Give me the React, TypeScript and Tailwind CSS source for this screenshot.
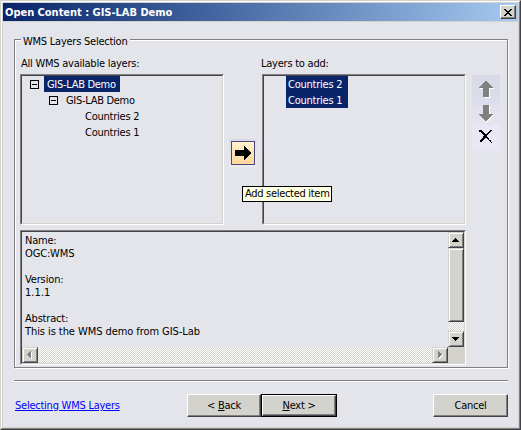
import type { ReactNode } from "react";

const raised =
  "bg-[#d4d2cc] border border-t-[#d4d2cc] border-l-[#d4d2cc] border-r-[#44414a] border-b-[#44414a] shadow-[inset_1px_1px_0_#fff,inset_-1px_-1px_0_#808080]";
const track =
  "bg-[repeating-conic-gradient(#ffffff_0_25%,#d4d2cc_0_50%)] bg-[length:2px_2px]";

function Sunken({ className, children }: { className: string; children?: ReactNode }) {
  return (
    <div className={`border border-t-[#808080] border-l-[#808080] border-r-white border-b-white ${className}`}>
      <div className="h-full border border-t-[#44414a] border-l-[#44414a] border-r-[#d4d2cc] border-b-[#d4d2cc]">
        {children}
      </div>
    </div>
  );
}

function Minus() {
  return (
    <svg width="9" height="9" shapeRendering="crispEdges" className="shrink-0">
      <path d="M0.5 0.5h8v8h-8zM2 4.5h5" fill="none" stroke="#000" />
    </svg>
  );
}

function Arrow({ d, disabled }: { d: string; disabled?: boolean }) {
  return (
    <svg width="14" height="14" shapeRendering="crispEdges" className="block">
      {disabled && <path d={d} fill="#fff" transform="translate(1 1)" />}
      <path d={d} fill={disabled ? "#808080" : "#000"} />
    </svg>
  );
}

function PushButton({ className, children }: { className: string; children: ReactNode }) {
  return (
    <button
      className={`flex h-[23px] items-center justify-center border border-t-white border-l-white border-r-[#44414a] border-b-[#44414a] bg-[#d4d2cc] shadow-[inset_-1px_-1px_0_#808080] ${className}`}
    >
      {children}
    </button>
  );
}

export default function App() {
  return (
    <div className="h-[430px] w-[521px] overflow-hidden border border-t-[#d4d2cc] border-l-[#d4d2cc] border-r-[#44414a] border-b-[#44414a] font-['DejaVu_Sans_Condensed','DejaVu_Sans',sans-serif] text-[11px] leading-[13px] tracking-[-0.24px] whitespace-nowrap text-black [font-stretch:condensed]">
      <div className="h-full border border-t-white border-l-white border-r-[#808080] border-b-[#808080]">
        <div className="flex h-full flex-col border border-[#d4d2cc] bg-[#e4e5eb]">
          <header className="flex h-[18px] shrink-0 items-center justify-between bg-linear-to-r from-[#0a246a] to-[#a6caf0] pr-[2px] pl-[2px]">
            <h1 className="text-[11px] font-bold tracking-[-0.02px] text-white">Open Content : GIS-LAB Demo</h1>
            <button className="flex h-[14px] w-4 items-center justify-center border border-t-white border-l-white border-r-[#44414a] border-b-[#44414a] bg-[#d4d2cc] shadow-[inset_-1px_-1px_0_#808080]">
              <svg width="8" height="7" shapeRendering="crispEdges">
                <path d="M0 0h2v1h1v1h2v-1h1v-1h2v1h-1v1h-1v1h-1v1h1v1h1v1h1v1h-2v-1h-1v-1h-2v1h-1v1h-2v-1h1v-1h1v-1h1v-1h-1v-1h-1v-1h-1z" />
              </svg>
            </button>
          </header>
          <div className="h-px shrink-0 bg-[#d4d2cc]" />

          <div className="mt-[17px] ml-[11px] h-[329px] w-[494px] shrink-0 border border-[#808080] shadow-[inset_1px_1px_0_#fff,1px_1px_0_#fff]">
            <div className="ml-[6px] flex h-[33px] flex-col">
              <div className="-mt-[5px] h-[13px] w-[109px] bg-[#e4e5eb] pl-[2px]">WMS Layers Selection</div>
              <div className="mt-[9px] flex">
                <span className="w-[240px]">All WMS available layers:</span>
                <span>Layers to add:</span>
              </div>
            </div>
            <div className="mt-px ml-[5px] flex">
              <Sunken className="h-[151px] w-[204px]">
                <div className="flex h-4 items-center pl-2">
                  <Minus />
                  <span className="ml-[5px] h-4 w-[76px] bg-[#0a246a] pt-px pl-[3px] leading-[15px] tracking-[-0.3px] text-white">GIS-LAB Demo</span>
                </div>
                <div className="flex h-4 items-center pl-[27px]">
                  <Minus />
                  <span className="ml-2 tracking-[-0.3px]">GIS-LAB Demo</span>
                </div>
                <div className="pt-px pl-[63px] leading-[15px]">Countries 2</div>
                <div className="pt-px pl-[63px] leading-[15px]">Countries 1</div>
              </Sunken>
              <div className="relative w-[38px] pt-[65px] pl-[5px]">
                <div className="h-7 w-7 bg-linear-to-b from-[#d9dae6] to-[#ededf4] p-[2px]">
                  <button className="flex h-6 w-6 items-center justify-center border border-[#49497c] bg-linear-to-b from-[#fff3ce] to-[#fdd69c]">
                    <svg width="16" height="14" shapeRendering="crispEdges">
                      <path d="M0 4h9V0h1v1h1v1h1v1h1v1h1v1h1v1h1v2h-1v1h-1v1h-1v1h-1v1h-1v1h-1v1H9v-4H0z" />
                    </svg>
                  </button>
                </div>
                <div className="absolute top-[112px] left-[18px] z-10 h-4 w-[90px] border border-black bg-[#ffffe1] pl-[2px] leading-[14px] tracking-[-0.3px]">
                  Add selected item
                </div>
              </div>
              <Sunken className="h-[151px] w-[204px]">
                <div className="ml-[22px] h-8 w-[62px] bg-[#0a246a] pl-[2px] leading-[15px] text-white">
                  <div className="pt-px">Countries 2</div>
                  <div className="pt-px">Countries 1</div>
                </div>
              </Sunken>
              <div className="mt-px ml-[6px] h-[76px] w-7 bg-[#e6e5ee]">
                <div className="flex h-[30px] justify-center bg-linear-to-b from-[#d8d9e5] to-[#dcdeed] pt-[6px]">
                  <svg width="16" height="18" shapeRendering="crispEdges">
                    {["#fff", "#808080"].map((c, i) => (
                      <path
                        key={c}
                        fill={c}
                        transform={i ? "" : "translate(1 1)"}
                        d="M7 0h2v1h1v1h1v1h1v1h1v1h1v1h1v1h-4v9H5V7H1V6h1V5h1V4h1V3h1V2h1V1h1z"
                      />
                    ))}
                  </svg>
                </div>
                <div className="flex h-5 justify-center bg-linear-to-b from-[#e1e1ed] to-[#e5e5ed]">
                  <svg width="16" height="18" shapeRendering="crispEdges">
                    {["#fff", "#808080"].map((c, i) => (
                      <path
                        key={c}
                        fill={c}
                        transform={i ? "" : "translate(1 1)"}
                        d="M5 0h6v9h4v1h-1v1h-1v1h-1v1h-1v1h-1v1H9v1H7v-1H6v-1H5v-1H4v-1H3v-1H2v-1H1V9h4z"
                      />
                    ))}
                  </svg>
                </div>
                <div className="flex h-[26px] justify-center bg-[#e9e7f5] pt-1">
                  <svg width="16" height="15" shapeRendering="crispEdges">
                    <path
                      fill="none"
                      stroke="#000"
                      d="M1 1.5h3M12 1.5h2M1 2.5h4M11 2.5h2M3 3.5h3M10 3.5h2M4 4.5h3M9 4.5h2M5 5.5h5M6 6.5h3M5 7.5h4M5 8.5h5M4 9.5h3M9 9.5h2M3 10.5h3M10 10.5h1M2 11.5h3M11 11.5h2M2 12.5h2M12 12.5h1M13 13.5h1"
                    />
                  </svg>
                </div>
              </div>
            </div>

            <Sunken className="mt-[5px] ml-[5px] h-[135px] w-[446px]">
              <div className="flex h-[115px]">
                <div className="w-[426px] pt-[2px] pl-[3px]">
                  <p>Name:</p>
                  <p className="tracking-[-0.15px]">OGC:WMS</p>
                  <p className="mt-[13px] tracking-[-0.15px]">Version:</p>
                  <p className="tracking-[0.05px]">1.1.1</p>
                  <p className="mt-[13px] tracking-[-0.2px]">Abstract:</p>
                  <p className="tracking-[-0.07px]">This is the WMS demo from GIS-Lab</p>
                </div>
                <div className={`flex w-4 flex-col ${track}`}>
                  <div className={`h-4 ${raised}`}>
                    <Arrow d="M6 5h1v1h1v1h1v1h1v1H3V8h1V7h1V6h1z" />
                  </div>
                  <div className={`mb-[9px] h-[74px] ${raised}`} />
                  <div className={`h-4 ${raised}`}>
                    <Arrow d="M3 5h7v1H9v1H8v1H7v1H6V8H5V7H4V6H3z" />
                  </div>
                </div>
              </div>
              <div className="flex h-4 w-[442px]">
                <div className={`flex w-[426px] justify-between ${track}`}>
                  <div className={`w-4 ${raised}`}>
                    <Arrow disabled d="M8 3v7H7V9H6V8H5V7H4V6h1V5h1V4h1V3z" />
                  </div>
                  <div className={`w-4 ${raised}`}>
                    <Arrow disabled d="M5 3h1v1h1v1h1v1h1v1H8v1H7v1H6v1H5z" />
                  </div>
                </div>
                <div className="w-4 bg-[#d4d2cc]" />
              </div>
            </Sunken>
          </div>

          <div className="mt-3 ml-[11px] h-[2px] w-[494px] shrink-0 border-t border-b border-t-[#808080] border-b-white" />
          <footer className="mt-3 ml-[11px] flex w-[494px]">
            <a href="#" className="mt-[5px] ml-px w-[172px] text-[#0000ff] underline underline-offset-1">
              Selecting WMS Layers
            </a>
            <PushButton className="w-[74px]">
              <span>&lt; <u className="underline-offset-1">B</u>ack</span>
            </PushButton>
            <div className="h-[23px] w-[76px] border border-black">
              <button className="flex h-[21px] w-[74px] items-center justify-center border border-t-white border-l-white border-r-[#44414a] border-b-[#44414a] bg-[#d4d2cc] shadow-[inset_-1px_-1px_0_#808080]">
                <span><u className="underline-offset-1">N</u>ext &gt;</span>
              </button>
            </div>
            <PushButton className="ml-auto w-[75px]">Cancel</PushButton>
          </footer>
        </div>
      </div>
    </div>
  );
}
